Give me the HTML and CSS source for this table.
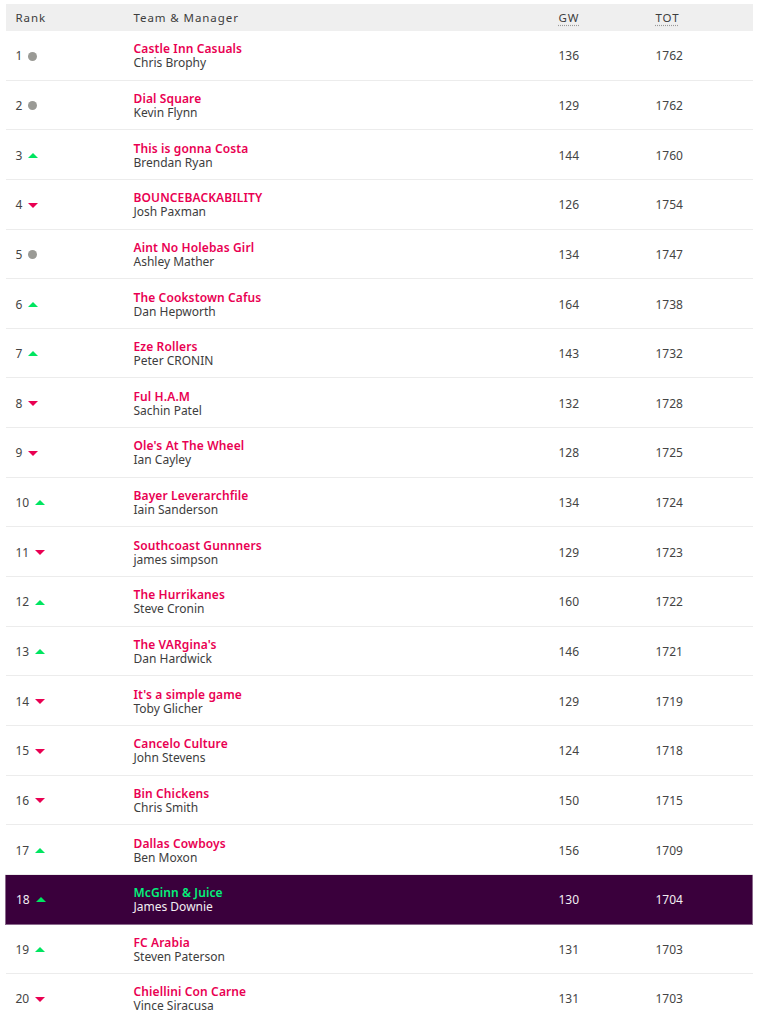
FILE: index.html
```html
<!DOCTYPE html>
<html>
<head>
<meta charset="utf-8">
<link rel="stylesheet" href="styles.css">
</head>
<body>
<table class="standings">
  <colgroup>
    <col class="c-rank"><col class="c-team"><col class="c-gw"><col class="c-tot">
  </colgroup>
  <thead>
    <tr>
      <th>Rank</th>
      <th>Team &amp; Manager</th>
      <th><abbr title="Gameweek">GW</abbr></th>
      <th><abbr title="Total">TOT</abbr></th>
    </tr>
  </thead>
  <tbody>
    <tr><td class="rank">1 <span class="mv same"></span></td><td><div class="team">Castle Inn Casuals</div><div class="mgr">Chris Brophy</div></td><td>136</td><td>1762</td></tr>
    <tr><td class="rank">2 <span class="mv same"></span></td><td><div class="team">Dial Square</div><div class="mgr">Kevin Flynn</div></td><td>129</td><td>1762</td></tr>
    <tr><td class="rank">3 <span class="mv up"></span></td><td><div class="team">This is gonna Costa</div><div class="mgr">Brendan Ryan</div></td><td>144</td><td>1760</td></tr>
    <tr><td class="rank">4 <span class="mv down"></span></td><td><div class="team">BOUNCEBACKABILITY</div><div class="mgr">Josh Paxman</div></td><td>126</td><td>1754</td></tr>
    <tr><td class="rank">5 <span class="mv same"></span></td><td><div class="team">Aint No Holebas Girl</div><div class="mgr">Ashley Mather</div></td><td>134</td><td>1747</td></tr>
    <tr><td class="rank">6 <span class="mv up"></span></td><td><div class="team">The Cookstown Cafus</div><div class="mgr">Dan Hepworth</div></td><td>164</td><td>1738</td></tr>
    <tr><td class="rank">7 <span class="mv up"></span></td><td><div class="team">Eze Rollers</div><div class="mgr">Peter CRONIN</div></td><td>143</td><td>1732</td></tr>
    <tr><td class="rank">8 <span class="mv down"></span></td><td><div class="team">Ful H.A.M</div><div class="mgr">Sachin Patel</div></td><td>132</td><td>1728</td></tr>
    <tr><td class="rank">9 <span class="mv down"></span></td><td><div class="team">Ole's At The Wheel</div><div class="mgr">Ian Cayley</div></td><td>128</td><td>1725</td></tr>
    <tr><td class="rank">10 <span class="mv up"></span></td><td><div class="team">Bayer Leverarchfile</div><div class="mgr">Iain Sanderson</div></td><td>134</td><td>1724</td></tr>
    <tr><td class="rank">11 <span class="mv down"></span></td><td><div class="team">Southcoast Gunnners</div><div class="mgr">james simpson</div></td><td>129</td><td>1723</td></tr>
    <tr><td class="rank">12 <span class="mv up"></span></td><td><div class="team">The Hurrikanes</div><div class="mgr">Steve Cronin</div></td><td>160</td><td>1722</td></tr>
    <tr><td class="rank">13 <span class="mv up"></span></td><td><div class="team">The VARgina's</div><div class="mgr">Dan Hardwick</div></td><td>146</td><td>1721</td></tr>
    <tr><td class="rank">14 <span class="mv down"></span></td><td><div class="team">It's a simple game</div><div class="mgr">Toby Glicher</div></td><td>129</td><td>1719</td></tr>
    <tr><td class="rank">15 <span class="mv down"></span></td><td><div class="team">Cancelo Culture</div><div class="mgr">John Stevens</div></td><td>124</td><td>1718</td></tr>
    <tr><td class="rank">16 <span class="mv down"></span></td><td><div class="team">Bin Chickens</div><div class="mgr">Chris Smith</div></td><td>150</td><td>1715</td></tr>
    <tr><td class="rank">17 <span class="mv up"></span></td><td><div class="team">Dallas Cowboys</div><div class="mgr">Ben Moxon</div></td><td>156</td><td>1709</td></tr>
    <tr class="mine"><td class="rank">18 <span class="mv up"></span></td><td><div class="team">McGinn &amp; Juice</div><div class="mgr">James Downie</div></td><td>130</td><td>1704</td></tr>
    <tr><td class="rank">19 <span class="mv up"></span></td><td><div class="team">FC Arabia</div><div class="mgr">Steven Paterson</div></td><td>131</td><td>1703</td></tr>
    <tr><td class="rank">20 <span class="mv down"></span></td><td><div class="team">Chiellini Con Carne</div><div class="mgr">Vince Siracusa</div></td><td>131</td><td>1703</td></tr>
  </tbody>
</table>
</body>
</html>
```

FILE: styles.css
```css
html, body {
  margin: 0;
  padding: 0;
  background: #fff;
}
body {
  padding: 4px 9px 0 5px;
  font-family: "Noto Sans", "Open Sans", sans-serif;
  color: #3d3d3d;
}
.standings {
  width: 747px;
  border-collapse: collapse;
  table-layout: fixed;
  font-size: 12px;
}
.c-rank { width: 118px; }
.c-team { width: 425px; }
.c-gw { width: 97px; }
.c-tot { width: 107px; }

.standings th {
  background: #efefef;
  height: 27px;
  padding: 0 0 0 10px;
  text-align: left;
  font-weight: 400;
  font-size: 11.5px;
  letter-spacing: 0.08em;
  color: #3d3d3d;
}
.standings abbr {
  text-decoration: underline dotted #999;
  text-underline-offset: 3px;
}
.standings td {
  height: 46.65px;
  padding: 2px 0 0 10px;
  border-bottom: 1px solid #ececec;
  vertical-align: middle;
  color: #444;
  line-height: 14px;
}
.rank {
  white-space: nowrap;
}
.mv {
  display: inline-block;
  margin-left: 3px;
  vertical-align: middle;
  position: relative;
  top: -1px;
}
.mv.same {
  width: 9px;
  height: 9px;
  border-radius: 50%;
  background: #9a9a95;
}
.mv.up {
  width: 0;
  height: 0;
  border-left: 5px solid transparent;
  border-right: 5px solid transparent;
  border-bottom: 5px solid #00e560;
}
.mv.down {
  width: 0;
  height: 0;
  border-left: 5px solid transparent;
  border-right: 5px solid transparent;
  border-top: 5px solid #e90052;
}
.team {
  color: #e90052;
  font-weight: 600;
  letter-spacing: 0.01em;
}
.mgr {
  color: #3d3d3d;
}
.mine td {
  background: #3a003c;
  color: #f2eef2;
  border-top: 1px solid #8a6a8c;
  border-bottom: 1px solid #8a6a8c;
}
.mine td:first-child { border-left: 1px solid #8a6a8c; }
.mine td:last-child { border-right: 1px solid #8a6a8c; }
.mine .team { color: #04f07a; }
.mine .mgr { color: #f2eef2; }
```
